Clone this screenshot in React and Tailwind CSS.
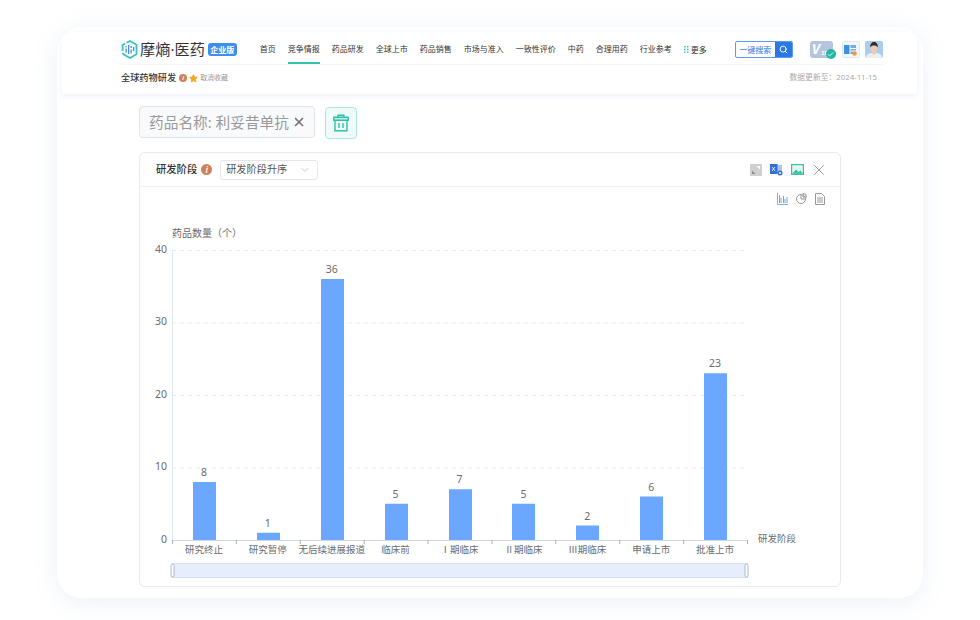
import React from "react";
import { Search, X, Star, ChevronDown, Check } from "lucide-react";

const FONT = { fontFamily: '"Noto Sans", "Noto Sans CJK SC", sans-serif' };
const navs = ["首页", "竞争情报", "药品研发", "全球上市", "药品销售", "市场与准入", "一致性评价", "中药", "合理用药", "行业参考"];
const data = [
  ["研究终止", 8], ["研究暂停", 1], ["无后续进展报道", 36], ["临床前", 5], ["Ⅰ期临床", 7],
  ["Ⅱ期临床", 5], ["Ⅲ期临床", 2], ["申请上市", 6], ["批准上市", 23],
];

function Info({ small }) {
  return (
    <span className={`flex items-center justify-center rounded-full bg-[#d0805a] font-bold italic leading-none text-white ${small ? "h-[8px] w-[8px] text-[6px]" : "h-[11px] w-[11px] text-[8px]"}`}>i</span>
  );
}

function Logo() {
  return (
    <svg width="18" height="19" viewBox="0 0 18 19" className="shrink-0">
      <path d="M5.500 2.800 9 1 15.500 4.700V14.300L9 18 2.500 14.300 1.500 13" fill="none" stroke="#36c5be" strokeWidth="1.800" />
      <path d="M1.600 11V5L4 3.500" fill="none" stroke="#36c5be" strokeWidth="1.800" />
      <g fill="#4a90d9">
        <rect x="4.500" y="6" width="1.300" height="1.300" />
        <rect x="4.500" y="8.500" width="1.300" height="4" />
        <rect x="7" y="5" width="1.300" height="9" />
        <rect x="9.500" y="6" width="1.300" height="2" />
        <rect x="9.500" y="9.500" width="1.300" height="4" />
        <rect x="12" y="7" width="1.300" height="4" />
      </g>
    </svg>
  );
}

function TrashIcon() {
  return (
    <svg width="16" height="18" viewBox="0 0 16 18" fill="none" stroke="#2fbfa8" strokeWidth="1.400">
      <path d="M5 3V1.200h6V3" />
      <path d="M.8 3.200h14.400v3H.8z" fill="#c9f0e8" />
      <path d="M2 6.200v10.600h12V6.200" />
      <path d="M6 9v5M10 9v5" />
    </svg>
  );
}

function Chart() {
  const x0 = 32, y0 = 335, unit = 7.25, step = 63.89;
  return (
    <svg width="699" height="380" viewBox="0 0 699 380" className="block" style={FONT}>
      <text x="32" y="32" fontSize="10" fill="#6b6b6b">药品数量（个）</text>
      {[10, 20, 30, 40].map((v) => (
        <line key={v} x1={x0} x2={x0 + 575} y1={y0 - v * unit + 0.5} y2={y0 - v * unit + 0.5} stroke="#e9ebef" strokeDasharray="4 4" />
      ))}
      <line x1={x0 + 0.5} x2={x0 + 0.5} y1={y0 - 290} y2={y0} stroke="#e0e6f1" />
      {[0, 10, 20, 30, 40].map((v) => (
        <text key={v} x={x0 - 5} y={y0 - v * unit + 2.5} textAnchor="end" fontSize="10.500" fill="#6b6b6b">{v}</text>
      ))}
      {data.map(([name, v], i) => {
        const cx = x0 + step * (i + 0.5);
        return (
          <g key={name}>
            <rect x={Math.ceil(cx - 11.5)} y={y0 - v * unit} width="23" height={v * unit} fill="#6ba7ff" />
            <text x={cx} y={y0 - v * unit - 6} textAnchor="middle" fontSize="10.500" fill="#6b6b6b">{v}</text>
            <text x={cx} y={y0 + 13} textAnchor="middle" fontSize="9.500" fill="#6b6b6b">{name}</text>
          </g>
        );
      })}
      <line x1={x0} x2={x0 + 575} y1={y0 + 0.5} y2={y0 + 0.5} stroke="#d5dae2" />
      {Array.from({ length: 10 }).map((_, i) => (
        <line key={i} x1={x0 + step * i + 0.5} x2={x0 + step * i + 0.5} y1={y0} y2={y0 + 4} stroke="#a9afb8" />
      ))}
      <text x={x0 + 586} y={y0 + 2} fontSize="9.500" fill="#6b6b6b">研发阶段</text>
      <rect x={x0 + 0.5} y={y0 + 23.5} width="575" height="14" fill="#e6edfc" stroke="#d6e0f5" />
      <rect x={x0 - 1} y={y0 + 24} width="3" height="13" rx="1.500" fill="#fff" stroke="#acb8d1" />
      <rect x={x0 + 573} y={y0 + 24} width="3" height="13" rx="1.500" fill="#fff" stroke="#acb8d1" />
    </svg>
  );
}

export default function App() {
  return (
    <div className="h-[620px] w-[980px] overflow-hidden bg-white pl-[57px] pt-[27px]" style={FONT}>
      <div className="h-[571px] w-[866px] rounded-[24px] bg-white pl-[5px] pt-[5px] shadow-[0_4px_24px_rgba(120,150,200,0.14)]">
        {/* header */}
        <div className="h-[62px] w-[855px] rounded-t-[10px] rounded-b-[3px] bg-white pl-[59px] pr-[34px] pt-[3px] shadow-[0_2px_6px_rgba(120,150,200,0.14)]">
          <div className="flex h-[30px] items-center whitespace-nowrap border-b border-[#f5f6f8]">
            <Logo />
            <span className="ml-px text-[15.200px] leading-none text-[#333]">摩熵·医药</span>
            <span className="ml-[3px] h-[13px] w-[29px] rounded-[3px] bg-[#3f8cf2] text-center text-[8px] font-bold leading-[13px] text-white">企业版</span>
            <nav className="ml-[23px] flex h-[29px] items-center gap-[12px]">
              {navs.map((n, i) => (
                <span key={n} className={`flex h-[29px] items-center border-b-2 text-[8px] text-[#333] ${i === 1 ? "border-[#36c1b0]" : "border-transparent"}`}>{n}</span>
              ))}
              <span className="flex items-center gap-[2px] text-[8px] text-[#333]">
                <svg width="5" height="7" viewBox="0 0 5 7" fill="#36c1b0"><rect width="1.500" height="1.500" /><rect x="3" width="1.500" height="1.500" /><rect y="2.700" width="1.500" height="1.500" /><rect x="3" y="2.700" width="1.500" height="1.500" /><rect y="5.400" width="1.500" height="1.500" /><rect x="3" y="5.400" width="1.500" height="1.500" /></svg>
                更多
              </span>
            </nav>
            <div className="ml-[28px] flex h-[17px] w-[58px] overflow-hidden rounded-[2px] border border-[#5b9bf0]">
              <span className="flex-1 text-center text-[8px] leading-[15px] text-[#2a78e4]">一键搜索</span>
              <span className="flex w-[17px] items-center justify-center bg-[#2a78e4]"><Search size={9} color="#fff" strokeWidth={2.5} /></span>
            </div>
            <div className="relative ml-[17px] h-[17px] w-[23px] rounded-[3px] bg-[#b5c5de] text-white">
              <span className="absolute left-[2px] top-[1px] text-[14px] font-bold italic leading-none">V</span>
              <span className="absolute left-[12px] top-[9px] text-[6px] font-bold leading-none">IP</span>
              <span className="absolute -bottom-[1px] -right-[3px] flex h-[10px] w-[10px] items-center justify-center rounded-full bg-[#22b8a0]"><Check size={7} color="#fff" strokeWidth={3} /></span>
            </div>
            <div className="ml-[9px] flex h-[17px] w-[18px] items-center justify-center rounded-[2px] border border-[#dbe8fa] bg-[#f2f7fe]">
              <svg width="13" height="12" viewBox="0 0 13 12"><path d="M0 1h5.500v9H0z" fill="#3f8fe0" /><path d="M6.500 1H12v3H6.500zM6.500 5H12v1.500H6.500zM6.500 7.500H9V10H6.500z" fill="#6fabe8" /><circle cx="10.500" cy="9.500" r="2.300" fill="#f09a37" /></svg>
            </div>
            <div className="ml-[5px] h-[17px] w-[18px] overflow-hidden rounded-[2px] bg-[#a9cdf2]">
              <svg width="18" height="17" viewBox="0 0 18 17"><path d="M1 17c0-4 3-5 8-5s8 1 8 5z" fill="#eef0ee" /><path d="M7.500 10h3v3l-1.500 1-1.500-1z" fill="#f3c9ae" /><ellipse cx="9" cy="7" rx="3.500" ry="4" fill="#f3c9ae" /><path d="M5.300 6.500C4.800 3 7 1 9 1s4.300 2 3.700 5.500C12 4.800 10 4.500 9 4.500s-3 .3-3.700 2z" fill="#2f2b2b" /></svg>
            </div>
          </div>
          <div className="flex h-[26px] items-center whitespace-nowrap">
            <span className="text-[9.200px] font-medium leading-none text-[#333]">全球药物研发</span>
            <span className="ml-[3px]"><Info small /></span>
            <Star size={9} className="ml-[2px]" fill="#f5a623" color="#f5a623" />
            <span className="ml-[2px] text-[7px] text-[#999]">取消收藏</span>
            <span className="ml-auto pr-[6px] text-[7.800px] text-[#aaa]">数据更新至：2024-11-15</span>
          </div>
        </div>

        {/* filter bar */}
        <div className="ml-[77px] mt-[12px] flex items-start gap-[10px]">
          <div className="flex h-[32px] w-[176px] items-center justify-between whitespace-nowrap rounded-[4px] border border-[#dfe3ea] bg-[#f9fafb] pl-[9px] pr-[8px] text-[14.700px] leading-none text-[#999]">
            <span>药品名称: 利妥昔单抗</span>
            <X size={14} color="#777" strokeWidth={3} />
          </div>
          <div className="mt-px flex h-[32px] w-[32px] items-center justify-center rounded-[4px] border border-[#aee6dc] bg-[#eefbf8]">
            <TrashIcon />
          </div>
        </div>

        {/* chart card */}
        <div className="ml-[77px] mt-[13px] h-[435px] w-[702px] rounded-[6px] border border-[#e8eaee] bg-white">
          <div className="flex h-[34px] items-center border-b border-[#f0f1f4] pl-[16px] pr-[14px]">
            <span className="text-[10.300px] font-medium text-[#333]">研发阶段</span>
            <span className="ml-[4px]"><Info /></span>
            <div className="ml-[8px] flex h-[20px] w-[98px] items-center justify-between rounded-[3px] border border-[#e2e5ea] pl-[5px] pr-[6px] text-[10.200px] text-[#555]">
              研发阶段升序
              <ChevronDown size={12} color="#c5c9d0" />
            </div>
            <div className="ml-auto flex items-center gap-[8px]">
              <svg width="12" height="12" viewBox="0 0 12 12"><rect width="12" height="12" rx="1" fill="#cfcfcf" /><path d="M6.500 2H10v3.500z" fill="#fff" /><path d="M5.500 10H2V6.500z" fill="#8f8f8f" /></svg>
              <svg width="13" height="13" viewBox="0 0 13 13"><rect x="6" y="2" width="6" height="8" fill="#a9c4ee" /><rect x="0" y="1" width="7.500" height="10" fill="#2f6fd6" /><path d="M2 4l3 4M5 4L2 8" stroke="#fff" strokeWidth="0.800" /><circle cx="10" cy="10" r="2.500" fill="#2f6fd6" /><circle cx="10" cy="10" r="1" fill="#fff" /></svg>
              <svg width="13" height="11" viewBox="0 0 13 11"><rect width="13" height="11" fill="#38bfa7" /><rect x="1.200" y="1.200" width="10.600" height="8.600" fill="#dff6f1" /><path d="M1.200 9.800 5 5.500l2.500 2.500 2-1.500 2.300 3.300z" fill="#38bfa7" /></svg>
              <X size={18} className="-mx-[2px]" color="#9a9a9a" strokeWidth={1.300} />
            </div>
          </div>
          <div className="flex justify-end gap-[8px] pr-[15px] pt-[6px]">
            <svg width="11" height="12" viewBox="0 0 11 12" fill="none"><path d="M.5 0v11.500H11" stroke="#7fb2d9" /><path d="M2.500 2v8M4 5v5M6.500 3v7M8 6v4M10 4v6" stroke="#6ea8d6" /></svg>
            <svg width="11" height="11" viewBox="0 0 11 11" fill="none" stroke="#999"><circle cx="5" cy="6" r="4.500" /><path d="M5 1.500V6h4.500" /><path d="M7 .5a3.500 3.500 0 0 1 3.500 3.500H7z" /></svg>
            <svg width="10" height="12" viewBox="0 0 10 12" fill="none" stroke="#999"><path d="M.5.500h6l3 3v8h-9z" /><path d="M2 5h6M2 7h6M2 9h6" /></svg>
          </div>
          <Chart />
        </div>
      </div>
    </div>
  );
}
